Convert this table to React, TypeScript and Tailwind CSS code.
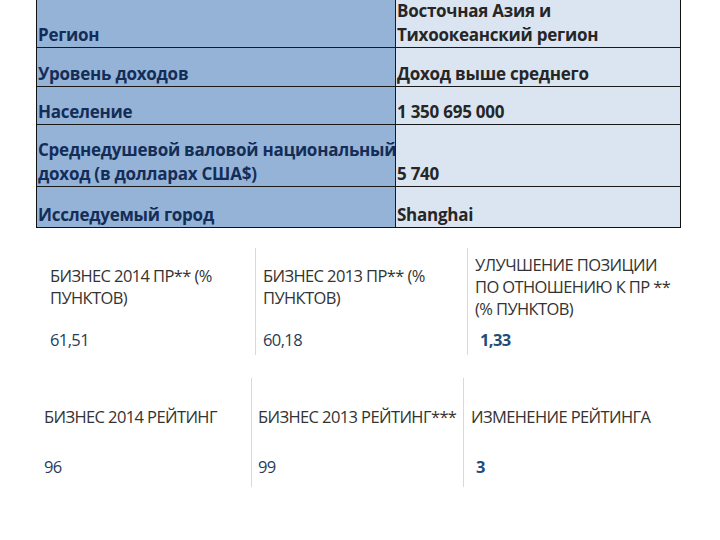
export default function App() {
  const rows = [
    { label: ['Регион'], value: ['Восточная Азия и', 'Тихоокеанский регион'], h: 'h-[48px]' },
    { label: ['Уровень доходов'], value: ['Доход выше среднего'], h: 'h-[39px]' },
    { label: ['Население'], value: ['1 350 695 000'], h: 'h-[38px]' },
    {
      label: ['Среднедушевой валовой национальный', 'доход (в долларах США$)'],
      value: ['5 740'],
      h: 'h-[62px]',
    },
    { label: ['Исследуемый город'], value: ['Shanghai'], h: 'h-[40px]' },
  ]

  return (
    <div className="w-[720px] h-[540px] bg-white overflow-hidden font-['Open_Sans',sans-serif]">
      {/* country profile table */}
      <div className="ml-[36px] w-[645px] border-l-[1.5px] border-r-[1.5px] border-b-[1.5px] border-[#111]">
        {rows.map((r, i) => (
          <div key={i} className={`flex ${r.h} ${i < rows.length - 1 ? 'border-b border-[#1a1a1a]' : ''}`}>
            <div className="w-[359px] shrink-0 bg-[#95b3d7] border-r border-[#1a1a1a] flex flex-col justify-end pl-[1px] text-[#142d57] text-[17px] font-bold leading-[24px] tracking-[-0.25px]">
              {r.label.map((t) => (
                <div key={t} className="whitespace-nowrap">{t}</div>
              ))}
            </div>
            <div className="flex-1 bg-[#dbe5f1] flex flex-col justify-end pl-[1px] text-[#262626] text-[17px] font-bold leading-[24px] tracking-[-0.25px]">
              {r.value.map((t) => (
                <div key={t} className="whitespace-nowrap">{t}</div>
              ))}
            </div>
          </div>
        ))}
      </div>

      {/* business points */}
      <div className="mt-[20px] ml-[36px] w-[644px] grid grid-cols-[219px_212px_213px] h-[107px] text-[#333] text-[16.5px] leading-[22px] tracking-[-0.6px]">
        <div className="pl-[14px] flex flex-col">
          <div className="h-[78px] flex flex-col justify-center">
            <div>БИЗНЕС 2014 ПР** (%</div>
            <div>ПУНКТОВ)</div>
          </div>
          <div className="mt-[3px] text-[#1f3d5c]">61,51</div>
        </div>
        <div className="border-l border-[#d9d9d9] pl-[7px] flex flex-col">
          <div className="h-[78px] flex flex-col justify-center">
            <div>БИЗНЕС 2013 ПР** (%</div>
            <div>ПУНКТОВ)</div>
          </div>
          <div className="mt-[3px] text-[#1f3d5c]">60,18</div>
        </div>
        <div className="border-l border-[#d9d9d9] pl-[7px] flex flex-col">
          <div className="h-[78px] flex flex-col justify-center">
            <div>УЛУЧШЕНИЕ ПОЗИЦИИ</div>
            <div>ПО ОТНОШЕНИЮ К ПР **</div>
            <div>(% ПУНКТОВ)</div>
          </div>
          <div className="mt-[3px] pl-[5px] text-[#1f4e79] font-bold">1,33</div>
        </div>
      </div>

      {/* business ranking */}
      <div className="mt-[23px] ml-[36px] w-[644px] grid grid-cols-[215px_212px_217px] h-[109px] text-[#333] text-[16.5px] leading-[22px] tracking-[-0.6px]">
        <div className="pl-[8px] flex flex-col">
          <div className="h-[78px] flex items-center">БИЗНЕС 2014 РЕЙТИНГ</div>
          <div className="text-[#1f3d5c]">96</div>
        </div>
        <div className="border-l border-[#d9d9d9] pl-[6px] flex flex-col">
          <div className="h-[78px] flex items-center">БИЗНЕС 2013 РЕЙТИНГ***</div>
          <div className="text-[#1f3d5c]">99</div>
        </div>
        <div className="border-l border-[#d9d9d9] pl-[7px] flex flex-col">
          <div className="h-[78px] flex items-center">ИЗМЕНЕНИЕ РЕЙТИНГА</div>
          <div className="pl-[5px] text-[#1f4e79] font-bold">3</div>
        </div>
      </div>
    </div>
  )
}
